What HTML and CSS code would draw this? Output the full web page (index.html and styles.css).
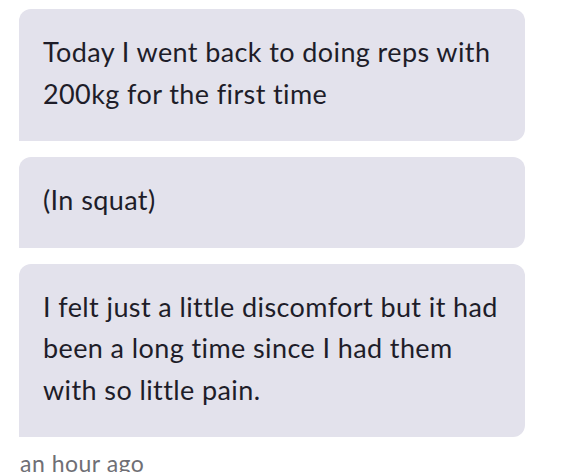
FILE: index.html
```html
<!DOCTYPE html>
<html>
<head>
<meta charset="utf-8">
<link rel="stylesheet" href="styles.css">
</head>
<body>
<div class="thread">
  <div class="bubble">Today I went back to doing reps with 200kg for the first time</div>
  <div class="bubble">(In squat)</div>
  <div class="bubble">I felt just a little discomfort but it had been a long time since I had them with so little pain.</div>
  <div class="time">an hour ago</div>
</div>
</body>
</html>
```
FILE: styles.css
```css
html, body {
  margin: 0;
  padding: 0;
  background: #ffffff;
}
body {
  font-family: "Lato", "Noto Sans", sans-serif;
}
.thread {
  display: flex;
  flex-direction: column;
  gap: 16px;
  padding: 9px 0 0 19px;
  width: 506px;
}
.bubble {
  background: #e3e2ec;
  color: #1e1d29;
  border-radius: 12px 12px 12px 0;
  padding: 22px 24px 27px 24px;
  font-size: 27px;
  letter-spacing: 0.4px;
  line-height: 41.5px;
}
.time {
  margin-top: -3px;
  font-size: 23px;
  letter-spacing: 0.5px;
  line-height: 26px;
  color: #6f6f75;
  padding-left: 1px;
}
```
